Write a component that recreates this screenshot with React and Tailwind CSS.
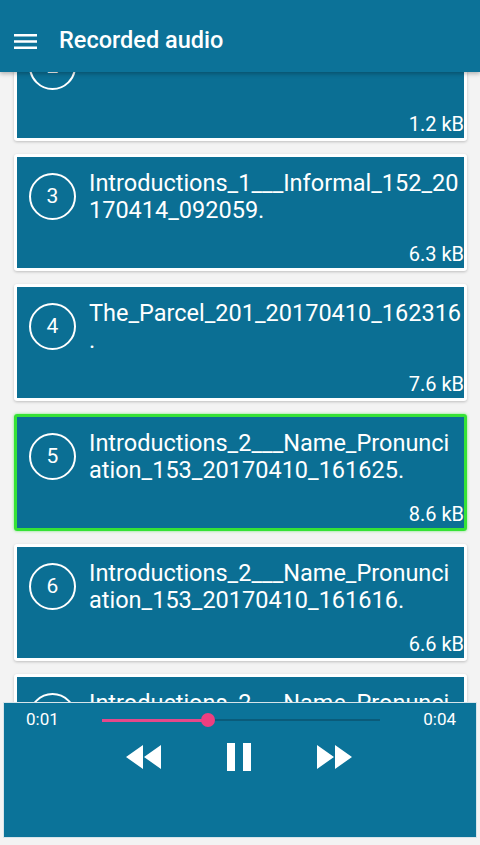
import React from "react";

const cards = [
  { n: 2, lines: ["The_Parcel_201_20170410_1623."], size: "1.2 kB" },
  { n: 3, lines: ["Introductions_1___Informal_152_20", "170414_092059."], size: "6.3 kB" },
  { n: 4, lines: ["The_Parcel_201_20170410_162316", "."], size: "7.6 kB" },
  { n: 5, lines: ["Introductions_2___Name_Pronunci", "ation_153_20170410_161625."], size: "8.6 kB", active: true },
  { n: 6, lines: ["Introductions_2___Name_Pronunci", "ation_153_20170410_161616."], size: "6.6 kB" },
  { n: 7, lines: ["Introductions_2___Name_Pronunci", "ation_153_20170410_161600."], size: "5.9 kB" },
];

function Card({ n, lines, size, active }) {
  return (
    <div
      className={
        "ml-[14px] mr-[13px] rounded-[3px] shrink-0 " +
        (active
          ? "border-[3px] border-[#36e236] shadow-[0_0_3px_rgba(40,220,40,0.6)]"
          : "p-[3px] bg-white shadow-[0_1px_3px_rgba(0,0,0,0.22)]")
      }
    >
      <div className="h-[111px] bg-[#0b6f94] flex flex-col justify-between">
        <div className="flex items-start pl-[12px]">
          <div className="mt-[16px] w-[47px] h-[47px] shrink-0 rounded-full border-2 border-white flex items-center justify-center text-white text-[21px] leading-none">
            {n}
          </div>
          <div className="ml-[13px] mt-[13px] text-white text-[23.5px] leading-[27px] whitespace-nowrap">
            {lines.map((l, i) => (
              <div key={i}>{l}</div>
            ))}
          </div>
        </div>
        <div className="text-right text-white text-[20px] leading-[24px] pb-[2px] pr-0">{size}</div>
      </div>
    </div>
  );
}

export default function App() {
  return (
    <div
      className="w-[480px] h-[845px] flex flex-col overflow-hidden bg-[#f3f3f3]"
      style={{ fontFamily: "Roboto, 'Noto Sans', sans-serif" }}
    >
      <div className="h-[72px] shrink-0 bg-[#0c7298] flex items-center relative z-10 shadow-[0_2px_4px_rgba(0,0,0,0.25)]">
        <svg className="ml-[14px] mt-[10px]" width="23" height="16" viewBox="0 0 23 16">
          <rect x="0" y="1" width="23" height="2.5" fill="white" />
          <rect x="0" y="7.25" width="23" height="2.5" fill="white" />
          <rect x="0" y="13.5" width="23" height="2.5" fill="white" />
        </svg>
        <div className="ml-[22px] mt-[9px] text-white text-[23.5px] font-medium">Recorded audio</div>
      </div>
      <div className="h-[630px] shrink-0 overflow-hidden">
        <div className="-mt-[48px] flex flex-col gap-[13px]">
          {cards.map((c) => (
            <Card key={c.n} {...c} />
          ))}
        </div>
      </div>
      <div className="flex-1 px-[3px] pb-[7px]">
        <div className="h-[136px] bg-[#0b7399] border border-[#d6e4ea] flex flex-col">
          <div className="flex items-center pl-[22px] pr-[20px] pt-[6px] h-[28px] text-white text-[17px]">
            <span>0:01</span>
            <div className="flex-1 mx-[43px] relative h-[14px]">
              <div className="absolute left-0 right-0 top-[6px] h-[1.5px] bg-[#0a5b7a]" />
              <div className="absolute left-0 w-[106px] top-[5.5px] h-[3px] bg-[#e5488a]" />
              <div className="absolute left-[99px] top-0 w-[14px] h-[14px] rounded-full bg-[#ee3f80]" />
            </div>
            <span>0:04</span>
          </div>
          <div className="flex justify-center gap-[46px] mt-[2px] pr-[2px]">
            <svg width="48" height="48" viewBox="0 0 24 24">
              <path d="M11 18V6l-8.5 6 8.5 6zm.5-6l8.5 6V6l-8.5 6z" fill="white" />
            </svg>
            <svg width="48" height="48" viewBox="0 0 24 24">
              <path d="M6 19h4V5H6v14zm8-14v14h4V5h-4z" fill="white" />
            </svg>
            <svg width="48" height="48" viewBox="0 0 24 24">
              <path d="M4 18l8.5-6L4 6v12zm9-12v12l8.5-6L13 6z" fill="white" />
            </svg>
          </div>
        </div>
      </div>
    </div>
  );
}
